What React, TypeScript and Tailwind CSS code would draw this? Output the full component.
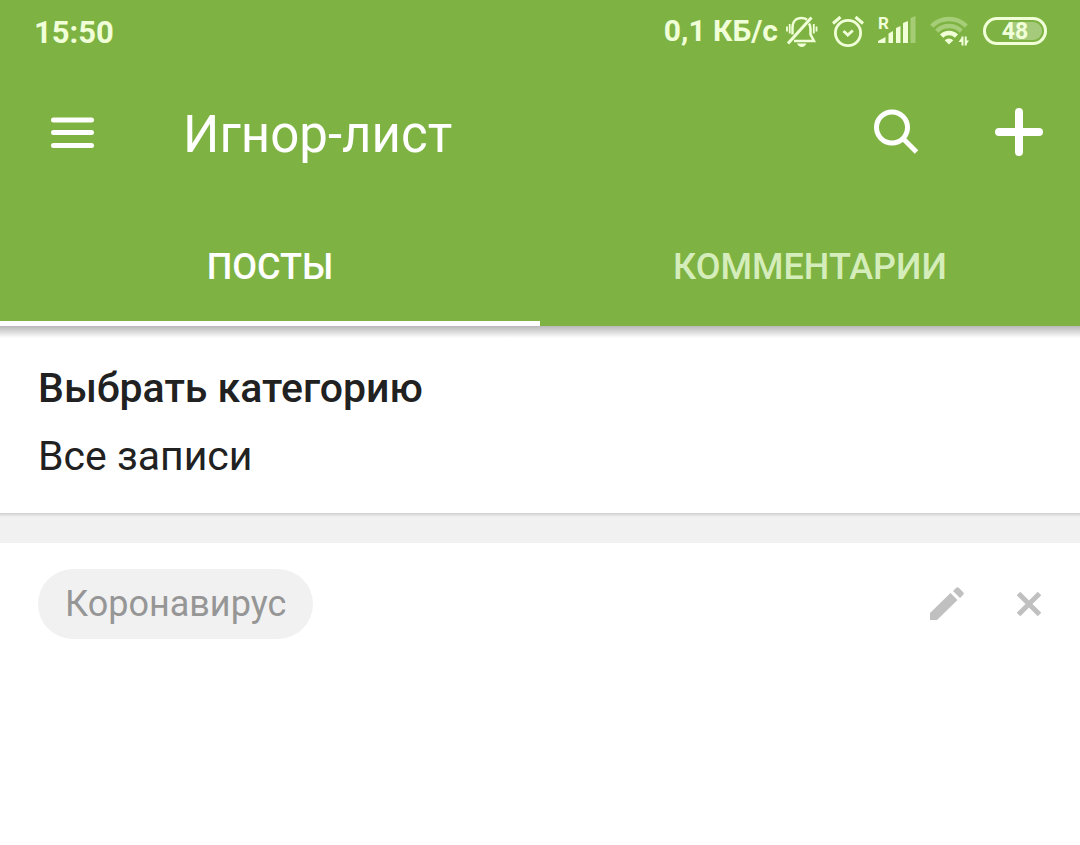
import React from 'react'

function BellOffIcon() {
    return (
        <svg width="32" height="32" viewBox="0 0 32 32" fill="none" stroke="currentColor" strokeWidth="2.500" aria-hidden="true">
            <path d="M2 28.500 25.500 2.500" strokeWidth="3" />
            <path d="M6.500 19.500V12.500C6.500 6.500 10 3 15.500 3c2.200 0 4 .600 5.500 1.600" />
            <path d="M23 8.500c1 1.500 1.500 3 1.500 5v6l3.500 6.500H8" />
            <path d="M11 28.500h9.500c-1 2-2.500 3.500-4.700 3.500S12 30.500 11 28.500Z" fill="currentColor" stroke="none" />
            <path d="M1 11.500v5M3.700 9v9.500M27.800 9v9.500M30.500 11.500v5" strokeWidth="1.800" />
        </svg>
    )
}

function AlarmIcon() {
    return (
        <svg width="32" height="32" viewBox="0 0 32 32" fill="none" stroke="currentColor" strokeWidth="2.800" aria-hidden="true">
            <circle cx="16" cy="18" r="12.600" />
            <path d="M1 8.500 8.500 2M31 8.500 23.500 2" strokeWidth="3" />
            <path d="m11.500 16 4.300 4 5-4.500" />
        </svg>
    )
}

function SignalIcon() {
    return (
        <svg width="38" height="32" viewBox="0 0 38 32" fill="currentColor" role="img" aria-label="R" className="overflow-visible">
            <text x="0" y="14" fontSize="17" fontWeight="700">R</text>
            <path d="M0 28v-2l7.500-4v6ZM10.500 28V18.500l4.500-2.500v12ZM18 28V13l4.500-2v17ZM25 28V8l5-2v22Z" />
            <path d="M32.500 28V3l5-2v27Z" opacity=".35" />
        </svg>
    )
}

function WifiIcon() {
    return (
        <svg width="39" height="32" viewBox="0 0 39 32" fill="none" stroke="currentColor" strokeWidth="4.500" aria-hidden="true">
            <g opacity=".35">
                <path d="M1.700 11.200a24.500 24.500 0 0 1 34.600 0" />
                <path d="M6.700 16.200a17.400 17.400 0 0 1 24.600 0" />
            </g>
            <path d="M11.600 21.100a10.500 10.500 0 0 1 14.800 0" />
            <path d="M19 29.500 14.700 25.200a6 6 0 0 1 8.600 0Z" fill="currentColor" stroke="none" />
            <path d="M32.500 21.500v9M35.700 21.500v9" strokeWidth="2" />
            <path d="M28.500 27l4-5.500V27ZM39 25.500l-3.500 5v-5Z" fill="currentColor" stroke="none" />
        </svg>
    )
}

function StatusBar() {
    return (
        <div className="flex h-14 items-center justify-between pt-1.5 pr-[33px] pl-[34px] text-[31px] leading-none font-bold text-[#f0ffd8]">
            <time className="pt-0.5">15:50</time>
            <div className="flex items-center">
                <span className="text-[30px]">0,1 КБ/с</span>
                <div className="ml-2 flex items-center gap-[14px]">
                    <BellOffIcon />
                    <AlarmIcon />
                    <SignalIcon />
                    <WifiIcon />
                    <span className="flex h-7 w-16 rounded-full border-3 border-[#f0ffd8] p-0.5 text-[23px]">
                        <span className="flex flex-1 items-center justify-center rounded-full bg-linear-to-r from-transparent from-45% to-white/30 to-45%">
                            48
                        </span>
                    </span>
                </div>
            </div>
        </div>
    )
}

function Toolbar() {
    return (
        <div className="flex h-[152px] items-center pr-[37px] pl-[51px]">
            <button type="button" aria-label="Меню">
                <svg width="43" height="32" viewBox="0 0 43 32" stroke="currentColor" strokeWidth="5" strokeLinecap="round">
                    <path d="M2.500 4h38M2.500 16.500h38M2.500 29.500h38" />
                </svg>
            </button>
            <h1 className="ml-[89px] flex-1 pt-1 text-[51px] leading-none">Игнор-лист</h1>
            <button type="button" aria-label="Поиск">
                <svg width="46" height="46" viewBox="0 0 46 46" fill="none" stroke="currentColor" strokeWidth="5">
                    <circle cx="18" cy="18.500" r="15.500" />
                    <path d="M29 29.500 42.500 43" />
                </svg>
            </button>
            <button type="button" aria-label="Добавить" className="ml-[75px]">
                <svg width="48" height="48" viewBox="0 0 48 48" stroke="currentColor" strokeWidth="8" strokeLinecap="round">
                    <path d="M24 4v40M4 24h40" />
                </svg>
            </button>
        </div>
    )
}

function Tabs() {
    return (
        <div role="tablist" className="grid h-[118px] grid-cols-2 text-[36px] leading-none font-medium">
            <button type="button" role="tab" aria-selected="true" className="border-b-5 border-white pt-1">
                ПОСТЫ
            </button>
            <button type="button" role="tab" aria-selected="false" className="border-b-5 border-transparent pt-1 text-[#d5edba]">
                КОММЕНТАРИИ
            </button>
        </div>
    )
}

function CategoryPicker() {
    return (
        <section className="bg-linear-to-b from-[#b8b8b8] to-white to-[12px] px-[38px] pt-9 pb-8">
            <label htmlFor="category" className="block text-[41px] leading-[52px] font-medium">
                Выбрать категорию
            </label>
            <select id="category" className="mt-3 block h-[55px] w-full appearance-none bg-transparent text-[41px]">
                <option>Все записи</option>
            </select>
        </section>
    )
}

function IgnoredTag({ name }: { name: string }) {
    return (
        <li className="flex items-center px-[38px] text-[#c0c0c0]">
            <span className="rounded-full bg-[#f1f1f1] px-[27px] text-[36px] leading-[70px] text-[#969696]">{name}</span>
            <button type="button" aria-label="Изменить" className="ml-auto">
                <svg width="34" height="34" viewBox="0 0 34 34" fill="currentColor">
                    <path d="M0 26 20.500 6l7 7L7 33H0ZM23 4l3-3q1.500-1.500 3 0l4 4q1.500 1.500 0 3l-3 3Z" />
                </svg>
            </button>
            <button type="button" aria-label="Удалить" className="ml-[52px]">
                <svg width="26" height="26" viewBox="0 0 26 26" stroke="currentColor" strokeWidth="5">
                    <path d="m2.500 2.500 21 21M23.500 2.500l-21 21" />
                </svg>
            </button>
        </li>
    )
}

export default function App() {
    return (
        <div className="min-h-screen bg-white font-[Roboto,'Noto_Sans',sans-serif] text-[#212121]">
            <header className="bg-[#7eb343] text-white">
                <StatusBar />
                <Toolbar />
                <Tabs />
            </header>
            <main>
                <CategoryPicker />
                <div className="h-[30px] bg-linear-to-b from-[#cfcfcf] to-[#f1f1f1] to-[4px]" />
                <ul className="pt-[26px]">
                    <IgnoredTag name="Коронавирус" />
                </ul>
            </main>
        </div>
    )
}
